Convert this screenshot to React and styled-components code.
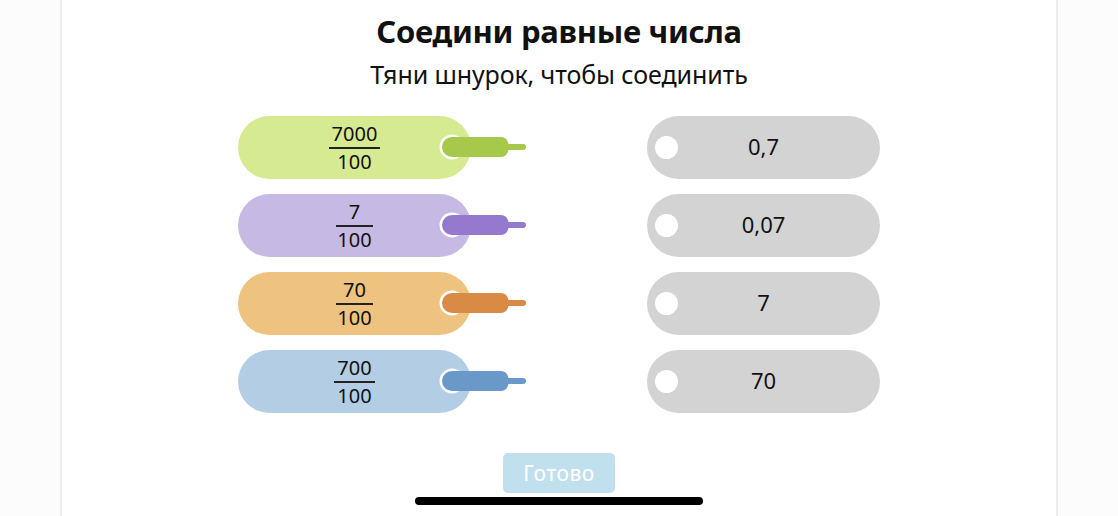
import React from 'react';
import styled, { createGlobalStyle } from 'styled-components';

const GlobalStyle = createGlobalStyle`
  html, body {
    margin: 0;
    padding: 0;
    background: #fcfcfc;
  }
  body {
    font-family: 'Noto Sans', 'Open Sans', sans-serif;
    color: #111;
  }
`;

const Screen = styled.div`
  position: relative;
  width: 1118px;
  height: 516px;
  overflow: hidden;
  display: flex;
  justify-content: center;
`;

const Sheet = styled.div`
  width: 994px;
  height: 100%;
  background: #fff;
  border-left: 2px solid #ececec;
  border-right: 2px solid #ececec;
  display: flex;
  flex-direction: column;
  align-items: center;
`;

const Title = styled.h1`
  margin: 10px 0 0;
  font-size: 31px;
  line-height: 42px;
  font-weight: 700;
  letter-spacing: -0.3px;
`;

const Hint = styled.p`
  margin: 2px 0 0;
  font-size: 25px;
  line-height: 40px;
  font-weight: 400;
  letter-spacing: -0.1px;
`;

const Board = styled.div`
  margin-top: 22px;
  display: grid;
  grid-template-columns: 233px 233px;
  column-gap: 176px;
  row-gap: 15px;
`;

const Tag = styled.div`
  position: relative;
  height: 63px;
  border-radius: 32px;
  background: ${p => p.$bg};
  display: flex;
  align-items: center;
  justify-content: center;
`;

const Fraction = styled.div`
  display: inline-flex;
  flex-direction: column;
  align-items: center;
  font-size: 20px;
  line-height: 22px;
`;

const Numerator = styled.span`
  padding: 0 3px 2px;
  min-width: 31px;
  text-align: center;
  border-bottom: 2px solid #222;
`;

const Denominator = styled.span`
  padding-top: 2px;
`;

const Value = styled.span`
  font-size: 22px;
  line-height: 26px;
  padding-bottom: 3px;
`;

const Lace = styled.svg`
  position: absolute;
  left: 201px;
  top: 18px;
  overflow: visible;
`;

const Hole = styled.span`
  position: absolute;
  left: 8px;
  top: 20px;
  width: 23px;
  height: 23px;
  border-radius: 50%;
  background: #fff;
`;

const DoneButton = styled.button`
  margin-top: 40px;
  width: 112px;
  height: 40px;
  border: none;
  border-radius: 5px;
  background: #bfe0ec;
  color: #fff;
  font-family: 'Noto Sans', sans-serif;
  font-size: 21px;
  letter-spacing: 0.5px;
`;

const HomeBar = styled.div`
  position: absolute;
  left: 415px;
  bottom: 11px;
  width: 288px;
  height: 8px;
  border-radius: 4px;
  background: #000;
`;

const pairs = [
  { num: '7000', den: '100', bg: '#d6ea91', lace: '#a6c84b', value: '0,7' },
  { num: '7', den: '100', bg: '#c6bae4', lace: '#9579cf', value: '0,07' },
  { num: '70', den: '100', bg: '#eec27f', lace: '#d98a45', value: '7' },
  { num: '700', den: '100', bg: '#b3cde5', lace: '#6a98c9', value: '70' },
];

// hole with the lace pulled through it, thick part then a thin aglet
function LaceEnd({ color }) {
  return (
    <Lace width="88" height="26" viewBox="0 0 88 26">
      <circle cx="13" cy="13" r="12.5" fill="#fff" />
      <path
        d="M13 3 H62 Q68 3 69.5 10 H84 a3 3 0 0 1 0 6 H69.5 Q68 23 62 23 H13 a10 10 0 0 1 0 -20 Z"
        fill={color}
      />
    </Lace>
  );
}

export default function App() {
  return (
    <>
      <GlobalStyle />
      <Screen>
        <Sheet>
          <Title>Соедини равные числа</Title>
          <Hint>Тяни шнурок, чтобы соединить</Hint>
          <Board>
            {pairs.map(p => (
              <React.Fragment key={p.num}>
                <Tag $bg={p.bg}>
                  <Fraction>
                    <Numerator>{p.num}</Numerator>
                    <Denominator>{p.den}</Denominator>
                  </Fraction>
                  <LaceEnd color={p.lace} />
                </Tag>
                <Tag $bg="#d3d3d3">
                  <Hole />
                  <Value>{p.value}</Value>
                </Tag>
              </React.Fragment>
            ))}
          </Board>
          <DoneButton>Готово</DoneButton>
        </Sheet>
        <HomeBar />
      </Screen>
    </>
  );
}
